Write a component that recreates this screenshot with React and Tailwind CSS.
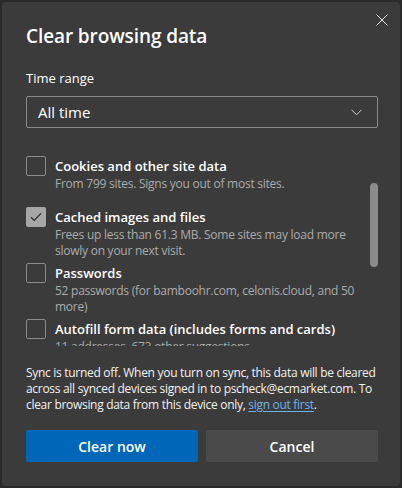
import React, { useState } from 'react';

const items = [
  {
    id: 'cookies',
    title: 'Cookies and other site data',
    desc: 'From 799 sites. Signs you out of most sites.',
    checked: false,
  },
  {
    id: 'cache',
    title: 'Cached images and files',
    desc: 'Frees up less than 61.3 MB. Some sites may load more slowly on your next visit.',
    checked: true,
  },
  {
    id: 'passwords',
    title: 'Passwords',
    desc: '52 passwords (for bamboohr.com, celonis.cloud, and 50 more)',
    checked: false,
  },
  {
    id: 'autofill',
    title: 'Autofill form data (includes forms and cards)',
    desc: '11 addresses, 673 other suggestions',
    checked: false,
  },
];

const Check = ({ checked, onClick }) => (
  <button
    onClick={onClick}
    className={`w-5 h-5 shrink-0 rounded-[2px] flex items-center justify-center ${
      checked ? 'bg-[#a6a6a6]' : 'border border-[#8c8c8c]'
    }`}
  >
    {checked && (
      <svg width="12" height="10" viewBox="0 0 12 10" fill="none">
        <path d="M1 5.2 L4.2 8.4 L11 1.4" stroke="#2e2e2e" strokeWidth="1.3" />
      </svg>
    )}
  </button>
);

export default function App() {
  const [sel, setSel] = useState(() => Object.fromEntries(items.map((i) => [i.id, i.checked])));

  return (
    <div
      className="w-[402px] h-[488px] bg-[#2a2a2a] p-[2px]"
      style={{ fontFamily: '"Open Sans", "Noto Sans", sans-serif' }}
    >
      <div className="relative h-full rounded-[4px] bg-[#3b3b3b] pl-6 pr-[22px] pt-[18px] pb-6 flex flex-col text-white">
        {/* close */}
        <button className="absolute top-[12px] right-[12px]">
          <svg width="12" height="12" viewBox="0 0 12 12" fill="none" className="block">
            <path d="M0.5 0.5 L11.5 11.5 M11.5 0.5 L0.5 11.5" stroke="#e6e6e6" strokeWidth="1" />
          </svg>
        </button>

        <h1 className="h-8 leading-8 text-[19px] font-semibold tracking-[-0.1px]">Clear browsing data</h1>

        <div className="mt-4 h-5 leading-5 text-[13px]">Time range</div>
        <div className="mt-2 h-8 border border-[#8a8a8a] rounded-[2px] flex items-center justify-between pl-[11px] pr-[15px]">
          <span className="text-[15px]">All time</span>
          <svg width="11" height="7" viewBox="0 0 11 7" fill="none">
            <path d="M0.5 0.8 L5.5 5.8 L10.5 0.8" stroke="#d0d0d0" strokeWidth="1" />
          </svg>
        </div>

        {/* list of data types */}
        <div className="relative mt-[28px] h-[190px] overflow-hidden">
          <div className="flex flex-col pr-4">
            {items.map((it) => (
              <div key={it.id} className="flex gap-[9px] min-h-[51px] pb-1">
                <Check
                  checked={sel[it.id]}
                  onClick={() => setSel((s) => ({ ...s, [it.id]: !s[it.id] }))}
                />
                <div className="flex flex-col">
                  <span className="h-5 leading-5 text-[13px] font-semibold">{it.title}</span>
                  <span className="leading-4 text-[12px] tracking-[-0.25px] text-[#ababab]">{it.desc}</span>
                </div>
              </div>
            ))}
          </div>
          <div className="absolute right-0 top-[27px] w-2 h-[84px] rounded-full bg-[#8b8b8b]" />
        </div>

        <p className="mt-[19px] leading-4 text-[12px] tracking-[-0.3px] text-[#f2f2f2]">
          Sync is turned off. When you turn on sync, this data will be cleared across all synced
          devices signed in to pscheck@ecmarket.com. To clear browsing data from this device only,{' '}
          <a className="text-[#6fb3ea] underline underline-offset-2">sign out first</a>.
        </p>

        <div className="mt-auto grid grid-cols-2 gap-2">
          <button className="h-8 rounded-[2px] bg-[#0067b8] text-[14px] font-semibold">Clear now</button>
          <button className="h-8 rounded-[2px] bg-[#4a4a4a] text-[14px] font-semibold">Cancel</button>
        </div>
      </div>
    </div>
  );
}
